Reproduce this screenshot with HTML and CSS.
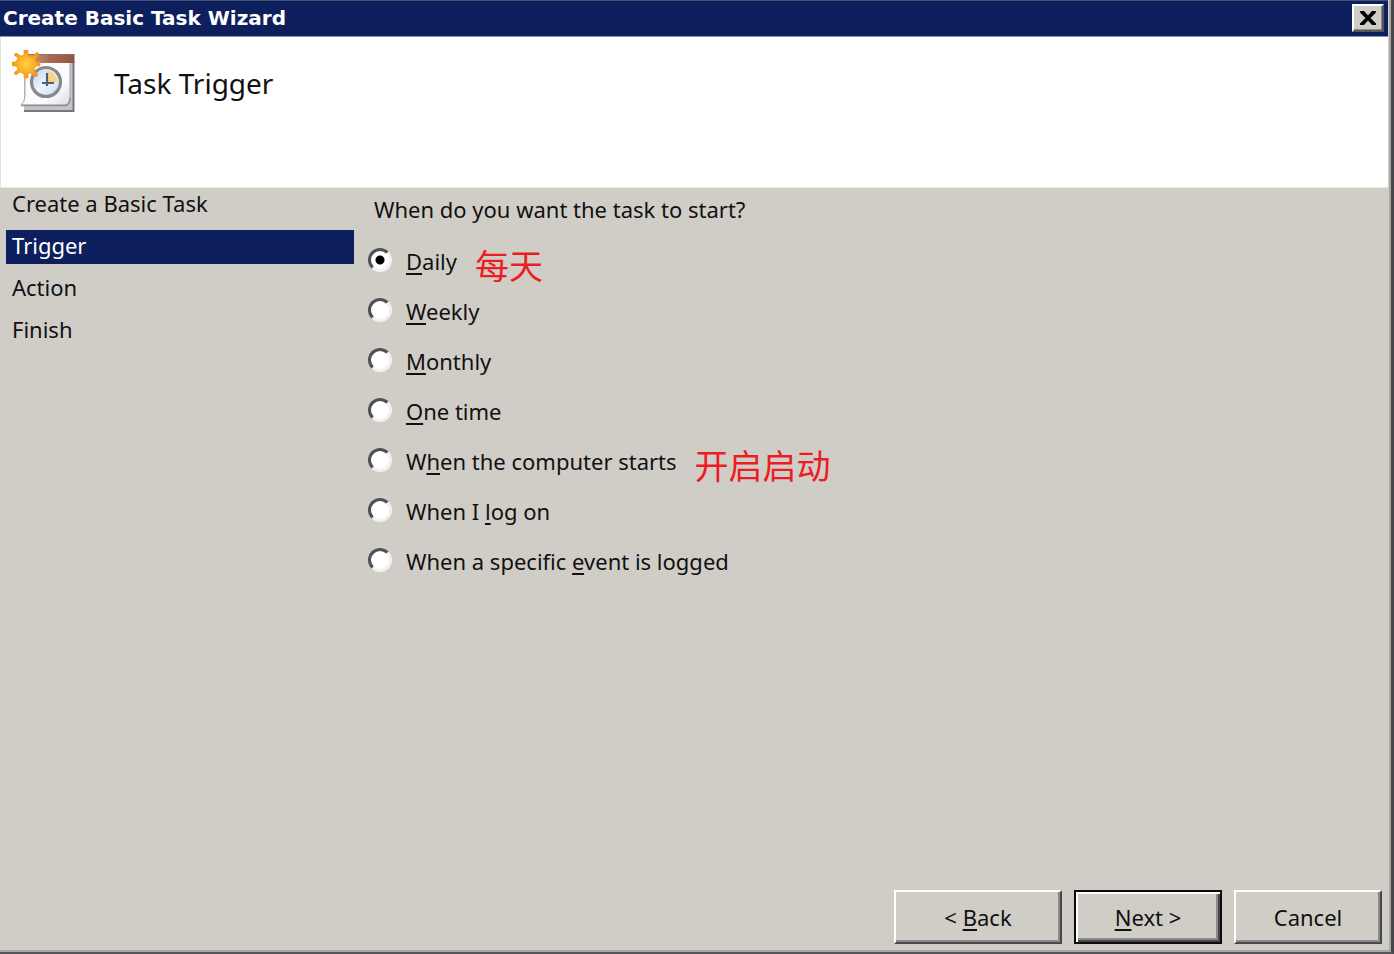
FILE: index.html
```html
<!DOCTYPE html>
<html lang="en">
<head>
<meta charset="utf-8">
<title>Create Basic Task Wizard</title>
<link rel="stylesheet" href="styles.css">
</head>
<body>
<main class="window">
  <header class="titlebar">
    <h1 class="titlebar-text">Create Basic Task Wizard</h1>
    <button class="close" type="button" aria-label="Close">
      <svg width="18" height="16" viewBox="0 0 18 16" aria-hidden="true"><path d="M1 1H5L9 5.500 13 1H17V2.500L11.500 8 17 13.500V15H13L9 10.500 5 15H1V13.500L6.500 8 1 2.500Z" fill="#000"/></svg>
    </button>
  </header>
  <section class="banner">
    <svg class="banner-icon" width="64" height="64" viewBox="0 0 64 64" aria-hidden="true">
      <defs>
        <linearGradient id="bar" x1="0" x2="1"><stop offset="0" stop-color="#d3a08a"/><stop offset=".5" stop-color="#a96a54"/><stop offset="1" stop-color="#8c5546"/></linearGradient>
        <linearGradient id="page" x1="0" x2="1" y2="1"><stop offset="0" stop-color="#fff"/><stop offset=".7" stop-color="#fbfafc"/><stop offset="1" stop-color="#dcdae0"/></linearGradient>
        <linearGradient id="face" x1="0" x2="1" y2="1"><stop offset="0" stop-color="#b9cfec"/><stop offset=".5" stop-color="#eef5fc"/><stop offset="1" stop-color="#c4d8ef"/></linearGradient>
        <radialGradient id="sun"><stop offset="0" stop-color="#ffd23e"/><stop offset="1" stop-color="#f59a16"/></radialGradient>
      </defs>
      <path d="M12 12H62V62H12Z" fill="#c3c3c8"/>
      <path d="M61.500 12V61H12" fill="none" stroke="#77777d" stroke-width="2"/>
      <path d="M13 9H58V47Q58 54 53 55H9Q13 52 13 45Z" fill="url(#page)" stroke="#a5a5ad"/>
      <path d="M9 55.500H54Q58 54 58 48" fill="none" stroke="#8f8f96" stroke-width="1.5"/>
      <path d="M13 4H62.500V13H13Z" fill="url(#bar)"/>
      <path d="M14 4.500H62" stroke="#8f7168"/>
      <circle cx="34" cy="32" r="14.500" fill="url(#face)" stroke="#85898f" stroke-width="3.2"/>
      <path d="M34 32V20.500A11.500 11.500 0 0 1 45.500 32Z" fill="#f5d486"/>
      <path d="M35 23V33H42M30 33H35V36" fill="none" stroke="#4a607c" stroke-width="2.200"/>
      <path d="M12 0H16V5L20 7 25 2 27 4 23 9 24 12H28V16H24L22 20 26 25 24 27 18 23 16 24V28H12V24L8 22 4 25 2 23 6 19 4 16H0V12H4L6 8 2 5 4 3 9 6 12 5Z" fill="url(#sun)" stroke="#f3951b" stroke-width=".7"/>
    </svg>
    <h2 class="banner-title">Task Trigger</h2>
  </section>
  <div class="content">
    <nav aria-label="Wizard steps">
      <ol class="steps">
        <li class="step">Create a Basic Task</li>
        <li class="step step-current" aria-current="step">Trigger</li>
        <li class="step">Action</li>
        <li class="step">Finish</li>
      </ol>
    </nav>
    <form class="panel">
      <fieldset class="choices">
        <legend class="question">When do you want the task to start?</legend>
        <div class="choice"><input class="radio" type="radio" name="start" id="daily" checked><label for="daily"><u>D</u>aily</label><span class="note">每天</span></div>
        <div class="choice"><input class="radio" type="radio" name="start" id="weekly"><label for="weekly"><u>W</u>eekly</label></div>
        <div class="choice"><input class="radio" type="radio" name="start" id="monthly"><label for="monthly"><u>M</u>onthly</label></div>
        <div class="choice"><input class="radio" type="radio" name="start" id="once"><label for="once"><u>O</u>ne time</label></div>
        <div class="choice"><input class="radio" type="radio" name="start" id="boot"><label for="boot">W<u>h</u>en the computer starts</label><span class="note">开启启动</span></div>
        <div class="choice"><input class="radio" type="radio" name="start" id="logon"><label for="logon">When I <u>l</u>og on</label></div>
        <div class="choice"><input class="radio" type="radio" name="start" id="event"><label for="event">When a specific <u>e</u>vent is logged</label></div>
      </fieldset>
    </form>
  </div>
  <footer class="actions">
    <button class="button button-back" type="button"><span>&lt; <u>B</u>ack</span></button>
    <button class="button button-default" type="button"><span><u>N</u>ext &gt;</span></button>
    <button class="button" type="button">Cancel</button>
  </footer>
</main>
</body>
</html>
```
FILE: styles.css
```css
* { box-sizing: border-box; }

body {
  margin: 0;
  background: #d0cdc7;
  color: #111;
  font: 22px/30px "Noto Sans", "Open Sans", "Noto Sans CJK SC", sans-serif;
}

h1, h2 { margin: 0; }

u {
  text-decoration-thickness: 2px;
  text-underline-offset: 3px;
  text-decoration-skip-ink: none;
}

.window {
  display: flex;
  flex-direction: column;
  min-height: 100vh;
  border-right: 3px solid #46474a;
  border-bottom: 2px solid #55565a;
  box-shadow: inset -2px -2px 0 #aaa8a4;
}

.titlebar {
  display: flex;
  align-items: center;
  justify-content: space-between;
  height: 37px;
  margin-right: 3px;
  padding: 0 4px 2px 3px;
  border-top: 1px solid #435477;
  border-bottom: 1px solid #8b93aa;
  background: #0d1f5c;
  color: #fff;
}

.titlebar-text {
  font: bold 20px/32px "DejaVu Sans", sans-serif;
}

.close {
  display: grid;
  place-items: center;
  width: 32px;
  height: 28px;
  padding: 0;
  border: 2px solid;
  border-color: #fff #55565a #55565a #fff;
  background: #d0cdc7;
  box-shadow: inset -1px -1px 0 #8d8b88;
}

.banner {
  display: flex;
  align-items: flex-start;
  gap: 38px;
  height: 151px;
  margin-right: 3px;
  padding: 13px 11px;
  border-left: 1px solid #e4e1dc;
  border-bottom: 1px solid #e8e6e2;
  background: #fff;
}

.banner-title {
  padding-top: 16px;
  font-size: 28px;
  font-weight: 400;
  line-height: 34px;
}

.content {
  display: grid;
  grid-template-columns: 354px 1fr;
  gap: 14px;
  flex: 1;
}

.steps {
  display: grid;
  gap: 8px;
  margin: 0;
  padding: 0 0 0 6px;
  list-style: none;
}

.step {
  height: 34px;
  padding-left: 6px;
}

.step-current {
  background: #0d1f5c;
  color: #fff;
}

.choices {
  margin: 0;
  padding: 0;
  border: 0;
}

.question {
  padding: 6px 6px 12px;
}

.choice {
  display: flex;
  align-items: center;
  height: 50px;
}

.radio {
  appearance: none;
  width: 24px;
  height: 24px;
  margin: 0 14px 2px 0;
  border: 3px solid;
  border-color: #505154 #f3f1ee #f3f1ee #505154;
  border-radius: 50%;
  background: #fff;
}

.radio:checked {
  background: radial-gradient(circle, #000 4px, #fff 5px);
}

.note {
  margin-left: 18px;
  padding-top: 8px;
  color: #ed1c24;
  font-family: "Noto Sans CJK SC", sans-serif;
  font-size: 34px;
}

.actions {
  display: flex;
  justify-content: flex-end;
  gap: 12px;
  padding: 0 9px 8px;
}

.button {
  width: 148px;
  height: 54px;
  padding: 0;
  border: 2px solid;
  border-color: #fff #46474a #46474a #fff;
  background: #d0cdc7;
  box-shadow: inset -2px -2px 0 #8d8b88;
  color: inherit;
  font: inherit;
}

.button-back { width: 168px; }

.button-default {
  border-color: #0b0b0b;
  box-shadow: inset 2px 2px 0 #fff, inset -2px -2px 0 #46474a, inset -4px -4px 0 #8d8b88;
}
```
